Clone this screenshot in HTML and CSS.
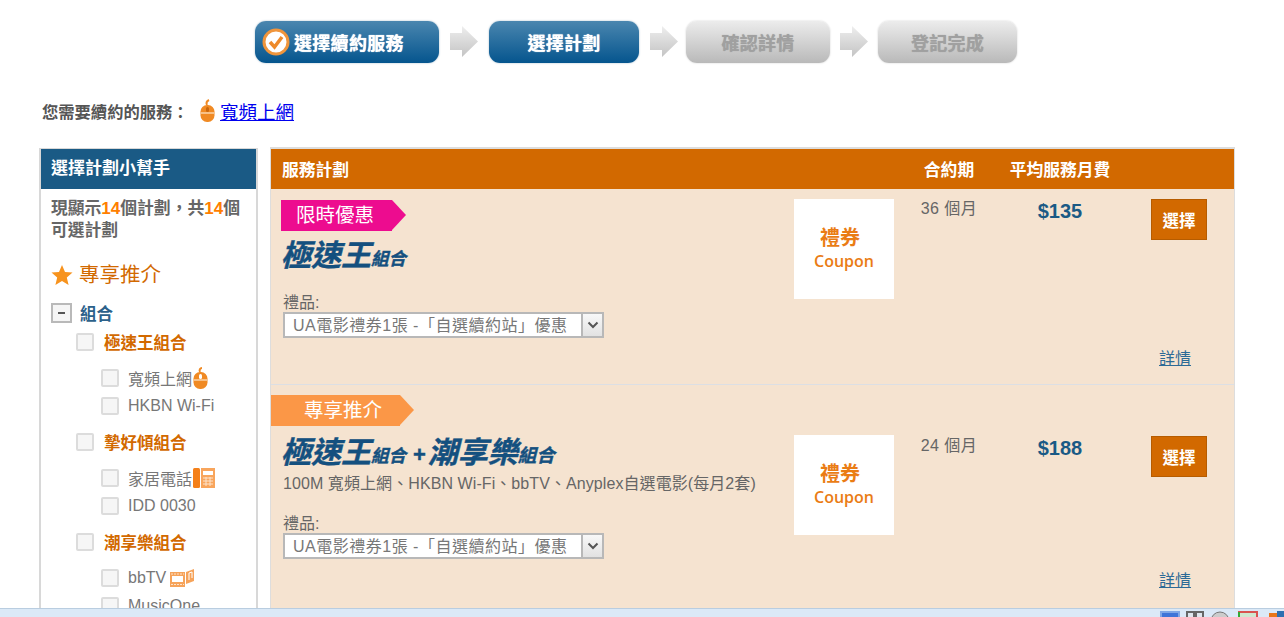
FILE: index.html
```html
<!DOCTYPE html>
<html lang="zh-Hant">
<head>
    <meta charset="UTF-8">
    <title>選擇計劃</title>
    <link rel="stylesheet" href="styles.css">
</head>
<body>
    <div class="steps">
        <div class="step step-done step-1">
            <svg class="step-check" width="28" height="28" viewBox="0 0 28 28"><circle cx="14" cy="14" r="12" fill="#fff" stroke="#f0953c" stroke-width="3"/><path d="M8 14l4.500 5L20 9" fill="none" stroke="#ee8a2a" stroke-width="3.500"/></svg>
            選擇續約服務
        </div>
        <svg class="arrow" width="28" height="31" viewBox="0 0 28 31"><defs><linearGradient id="arrow-fill" x1="0" y1="0" x2="0" y2="1"><stop offset="0" stop-color="#eeeeee"/><stop offset="1" stop-color="#c4c4c4"/></linearGradient></defs><path d="M0 7h12V0l16 15.500L12 31v-7H0z" fill="url(#arrow-fill)"/></svg>
        <div class="step step-done step-2">選擇計劃</div>
        <svg class="arrow" width="28" height="31" viewBox="0 0 28 31"><path d="M0 7h12V0l16 15.500L12 31v-7H0z" fill="url(#arrow-fill)"/></svg>
        <div class="step step-off step-3">確認詳情</div>
        <svg class="arrow" width="28" height="31" viewBox="0 0 28 31"><path d="M0 7h12V0l16 15.500L12 31v-7H0z" fill="url(#arrow-fill)"/></svg>
        <div class="step step-off step-4">登記完成</div>
    </div>

    <div class="service-line">
        <span class="service-label">您需要續約的服務：</span>
        <svg width="15" height="24" viewBox="0 0 15 24"><path d="M7 6C6 4 7 2 9 1" fill="none" stroke="#f08a24" stroke-width="2"/><rect x="0.500" y="6" width="14" height="17" rx="6.500" fill="#f08a24"/><path d="M1 14h13" stroke="#fbd3a8" stroke-width="1.500"/><rect x="6" y="8" width="3" height="5" rx="1.500" fill="#c9660c"/></svg>
        <a href="#" class="service-link">寬頻上網</a>
    </div>

    <div class="page">
        <aside class="helper">
            <h3 class="helper-title">選擇計劃小幫手</h3>
            <p class="helper-count">現顯示<em>14</em>個計劃，共<em>14</em>個可選計劃</p>
            <div class="helper-star">
                <svg width="22" height="22" viewBox="0 0 22 22"><path d="M11 1l3 7 7.500.6-5.700 5 1.800 7.400L11 17l-6.600 4 1.800-7.400-5.700-5L8 8z" fill="#f7931e"/></svg>
                專享推介
            </div>
            <div class="tree-head"><span class="minus"></span>組合</div>

            <label class="tree-group"><input type="checkbox">極速王組合</label>
            <div class="tree-items">
                <label class="tree-item"><input type="checkbox">寬頻上網
                    <svg class="icon-after" width="15" height="22" viewBox="0 0 15 22"><path d="M7 5C6 3 7 1 9 1" fill="none" stroke="#f08a24" stroke-width="2"/><rect x="0.500" y="5" width="14" height="17" rx="6.500" fill="#f08a24"/><path d="M1 13h13" stroke="#fbd3a8" stroke-width="1.500"/><rect x="6" y="7" width="3" height="5" rx="1.500" fill="#fff"/></svg>
                </label>
                <label class="tree-item"><input type="checkbox">HKBN Wi-Fi</label>
            </div>

            <label class="tree-group"><input type="checkbox">摯好傾組合</label>
            <div class="tree-items">
                <label class="tree-item"><input type="checkbox">家居電話
                    <svg class="icon-after" width="22" height="20" viewBox="0 0 22 20"><rect x="0" y="0" width="7" height="20" rx="1.500" fill="#f4801a"/><rect x="8" y="0" width="14" height="20" fill="#f8a55c"/><rect x="10" y="3" width="10" height="4" fill="#fff"/><path d="M10 10h10M10 13h10M10 16h10M13 9v9M17 9v9" stroke="#fde3cb"/></svg>
                </label>
                <label class="tree-item"><input type="checkbox">IDD 0030</label>
            </div>

            <label class="tree-group"><input type="checkbox">潮享樂組合</label>
            <div class="tree-items">
                <label class="tree-item"><input type="checkbox">bbTV
                    <svg class="icon-tv" width="24" height="18" viewBox="0 0 24 18"><rect x="0" y="3" width="15" height="15" fill="#f6a35a"/><rect x="2" y="7" width="11" height="6" fill="#fff"/><path d="M1 5h13M1 15.500h13" stroke="#fde3cb" stroke-dasharray="2 1"/><path d="M16 3l8-3v12l-8 3z" fill="#f6a35a"/><path d="M19 4v7M19 4l3-1v6" fill="none" stroke="#fff"/></svg>
                </label>
                <label class="tree-item"><input type="checkbox">MusicOne</label>
            </div>
        </aside>

        <main class="plans">
            <div class="plans-head plan-grid">
                <div class="head-name">服務計劃</div>
                <div></div>
                <div class="center">合約期</div>
                <div class="center">平均服務月費</div>
                <div></div>
            </div>

            <section class="plan plan-grid plan-first">
                <div class="plan-info">
                    <div class="ribbon ribbon-pink">限時優惠</div>
                    <div class="plan-logo"><span class="logo-big">極速王</span><span class="logo-small">組合</span></div>
                    <div class="gift gift-first">
                        <div class="gift-label">禮品:</div>
                        <div class="gift-box">
                            <select class="gift-select"><option>UA電影禮券1張 -「自選續約站」優惠</option></select>
                            <span class="gift-btn"><svg width="12" height="8" viewBox="0 0 12 8"><path d="M1.500 1.500L6 6l4.500-4.500" fill="none" stroke="#555" stroke-width="2"/></svg></span>
                        </div>
                    </div>
                </div>
                <div class="coupon"><span class="coupon-zh">禮券</span><span class="coupon-en">Coupon</span></div>
                <div class="term">36 個月</div>
                <div class="price">$135</div>
                <div class="action">
                    <button class="select-btn">選擇</button>
                    <a href="#" class="details">詳情</a>
                </div>
            </section>

            <section class="plan plan-grid plan-second">
                <div class="plan-info">
                    <div class="ribbon ribbon-orange">專享推介</div>
                    <div class="plan-logo"><span class="logo-big">極速王</span><span class="logo-small">組合</span><span class="logo-plus">+</span><span class="logo-big">潮享樂</span><span class="logo-small">組合</span></div>
                    <div class="plan-desc">100M 寬頻上網、HKBN Wi-Fi、bbTV、Anyplex自選電影(每月2套)</div>
                    <div class="gift">
                        <div class="gift-label">禮品:</div>
                        <div class="gift-box">
                            <select class="gift-select"><option>UA電影禮券1張 -「自選續約站」優惠</option></select>
                            <span class="gift-btn"><svg width="12" height="8" viewBox="0 0 12 8"><path d="M1.500 1.500L6 6l4.500-4.500" fill="none" stroke="#555" stroke-width="2"/></svg></span>
                        </div>
                    </div>
                </div>
                <div class="coupon"><span class="coupon-zh">禮券</span><span class="coupon-en">Coupon</span></div>
                <div class="term">24 個月</div>
                <div class="price">$188</div>
                <div class="action">
                    <button class="select-btn">選擇</button>
                    <a href="#" class="details">詳情</a>
                </div>
            </section>
        </main>
    </div>

    <div class="tray">
        <svg width="20" height="6" viewBox="0 0 20 6"><rect x="1" y="1" width="18" height="9" fill="#3f74d8" stroke="#7fa6e6" stroke-width="2"/></svg>
        <svg width="18" height="6" viewBox="0 0 18 6"><path d="M1 1h7v7H1zM10 1h7v7h-7z" fill="#dfe6ee" stroke="#666" stroke-width="2"/></svg>
        <svg class="tray-wide" width="20" height="6" viewBox="0 0 20 6"><circle cx="10" cy="10" r="9" fill="#ccc" stroke="#777"/></svg>
        <svg class="tray-wider" width="20" height="6" viewBox="0 0 20 6"><rect x="1" y="1" width="18" height="9" fill="#cfe8cf" stroke="#d9534f" stroke-width="2"/><path d="M1 6V1" stroke="#3a3" stroke-width="2"/></svg>
        <svg width="15" height="6" viewBox="0 0 15 6"><rect x="0" y="2" width="8" height="4" fill="#e8761a"/><rect x="8" y="0" width="7" height="6" fill="#2d6fb0"/></svg>
    </div>
</body>
</html>
```

FILE: styles.css
```css
html, body {
    height: 617px;
    overflow: hidden;
}

body {
    margin: 0;
    background-color: #ffffff;
    color: #666666;
    font-family: "Liberation Sans", Arial, "Noto Sans CJK TC", sans-serif;
    font-size: 16px;
}

/* top wizard */
.steps {
    display: flex;
    align-items: center;
    padding: 20px 0 0 255px;
    height: 43px;
}

.step {
    display: flex;
    align-items: center;
    justify-content: center;
    box-sizing: border-box;
    height: 42px;
    border-radius: 11px;
    font-size: 18px;
    font-weight: bold;
    letter-spacing: 0.3px;
}

.step-done {
    background: linear-gradient(#4a86af, #05558e);
    color: #ffffff;
    box-shadow: 0 0 2px #9db5c6;
    text-shadow: 0 0 1px #ffffff;
}

.step-off {
    background: linear-gradient(#ececec, #b9b9b9);
    color: #a0a0a0;
    box-shadow: 0 0 2px #cccccc;
    text-shadow: 0 0 1px #a0a0a0;
}

.step-1 {
    justify-content: flex-start;
    width: 184px;
    padding-left: 7px;
    gap: 4px;
    margin-right: 11px;
}

.step-2 {
    width: 150px;
    margin: 0 11px;
}

.step-3 {
    width: 144px;
    margin: 0 10px 0 8px;
}

.step-4 {
    width: 139px;
    margin-left: 10px;
}

.arrow {
    flex: none;
}

/* service line */
.service-line {
    display: flex;
    align-items: center;
    height: 30px;
    margin: 33px 0 0 42px;
}

.service-label {
    width: 158px;
    font-weight: bold;
    font-size: 16.300px;
    color: #555555;
}

.service-link {
    margin-left: 5px;
    font-size: 18.500px;
    color: #0000ee;
}

/* two columns */
.page {
    display: flex;
    align-items: flex-start;
    gap: 12px;
    margin: 22px 0 0 39px;
}

.helper {
    box-sizing: border-box;
    width: 219px;
    height: 520px;
    border: 2px solid #d8d8d8;
    border-bottom: 0;
    border-top-width: 1px;
}

.helper-title {
    margin: 0;
    height: 40px;
    padding-left: 10px;
    background-color: #1a5a85;
    color: #ffffff;
    font-size: 17px;
    line-height: 40px;
}

.helper-count {
    margin: 9px 4px 0 10px;
    font-size: 16.800px;
    font-weight: bold;
    line-height: 22px;
    color: #666666;
}

.helper-count em {
    font-style: normal;
    font-size: 17px;
    color: #ff7f00;
}

.helper-star {
    display: flex;
    align-items: center;
    gap: 6px;
    margin: 18px 0 0 10px;
    font-size: 20.500px;
    line-height: 30px;
    color: #d26900;
}

.tree-head {
    display: flex;
    align-items: center;
    gap: 8px;
    margin: 11px 0 3px 10px;
    height: 24px;
    font-size: 16.500px;
    font-weight: bold;
    color: #2c618a;
}

.minus {
    box-sizing: border-box;
    position: relative;
    width: 21px;
    height: 20px;
    border: 2px solid #b9b9b9;
    background-color: #f5f5f5;
}

.minus::after {
    content: "";
    position: absolute;
    left: 5px;
    top: 7px;
    width: 7px;
    height: 2px;
    background-color: #555555;
}

input[type="checkbox"] {
    appearance: none;
    flex: none;
    box-sizing: border-box;
    width: 18px;
    height: 18px;
    margin: 0;
    border: 2px solid #dcdcdc;
    border-radius: 2px;
    background-color: #f6f6f6;
}

.tree-group {
    display: flex;
    align-items: center;
    gap: 10px;
    height: 28px;
    margin-left: 35px;
    font-size: 16.500px;
    font-weight: bold;
    color: #d26900;
}

.tree-items {
    margin: 8px 0;
}

.tree-item {
    display: flex;
    align-items: center;
    gap: 9px;
    height: 28px;
    margin-left: 60px;
    font-size: 16px;
    color: #777777;
}

.icon-after {
    margin-left: -8px;
}

.icon-tv {
    margin-left: -5px;
}

/* plans table */
.plans {
    box-sizing: border-box;
    width: 965px;
    border: 1px solid #dddddd;
    border-top: 2px solid #dddddd;
    margin-top: -1px;
}

.plan-grid {
    display: grid;
    grid-template-columns: 523px 100px 110px 112px 118px;
}

.plans-head {
    height: 40px;
    align-items: center;
    background-color: #d26900;
    color: #ffffff;
    font-size: 16.800px;
    font-weight: bold;
}

.head-name {
    padding-left: 11px;
}

.center {
    text-align: center;
}

.plan {
    background-color: #f5e3d0;
}

.plan-first {
    height: 195px;
    border-bottom: 1px solid #dcdfe4;
}

.plan-second {
    height: 240px;
}

.plan-info {
    padding-left: 12px;
}

.ribbon {
    position: relative;
    box-sizing: border-box;
    height: 31px;
    color: #ffffff;
    font-size: 19.500px;
    line-height: 30px;
}

.ribbon::after {
    content: "";
    position: absolute;
    top: 0;
    left: 100%;
    border-style: solid;
    border-width: 15.500px 0 15.500px 14px;
    border-color: transparent;
}

.ribbon-pink {
    width: 111px;
    margin: 11px 0 0 -2px;
    padding-left: 15px;
    background-color: #ed0c8f;
}

.ribbon-pink::after {
    border-left-color: #ed0c8f;
}

.ribbon-orange {
    width: 129px;
    margin: 10px 0 0 -12px;
    padding-left: 33px;
    background-color: #fb9747;
}

.ribbon-orange::after {
    border-left-color: #fb9747;
}

.plan-logo {
    display: flex;
    align-items: flex-end;
    height: 32px;
    margin: 9px 0 0 -2px;
    color: #14507f;
    font-weight: bold;
    font-style: italic;
    -webkit-text-stroke: 0.4px #14507f;
}

.plan-second .plan-logo {
    margin-top: 11px;
}

.logo-big {
    font-size: 30px;
    line-height: 32px;
}

.logo-small {
    font-size: 17.500px;
    line-height: 26px;
}

.logo-plus {
    margin: 0 2px 0 7px;
    font-size: 22px;
    line-height: 28px;
    font-style: normal;
}

.plan-second .logo-small:last-child {
    font-size: 18.500px;
}

.plan-desc {
    margin-top: 5px;
    font-size: 16px;
    letter-spacing: 0.08px;
    line-height: 20px;
    color: #666666;
}

.gift {
    margin-top: 20px;
}

.gift-first {
    margin-top: 21px;
}

.gift-label {
    font-size: 16px;
    line-height: 19px;
    color: #666666;
}

.gift-box {
    display: flex;
    box-sizing: border-box;
    width: 321px;
    height: 26px;
    border: 2px solid #b8b8b8;
    background-color: #ffffff;
}

.gift-select {
    appearance: none;
    flex: 1;
    min-width: 0;
    padding: 0 0 0 8px;
    border: 0;
    background: transparent;
    color: #777777;
    font-family: "Liberation Sans", Arial, "Noto Sans CJK TC", sans-serif;
    font-size: 16px;
    letter-spacing: 0.5px;
}

.gift-btn {
    display: flex;
    align-items: center;
    justify-content: center;
    width: 19px;
    border-left: 2px solid #b8b8b8;
    background: linear-gradient(#f8f8f8, #e2e2e2);
}

.coupon {
    display: flex;
    flex-direction: column;
    align-items: center;
    justify-content: center;
    box-sizing: border-box;
    width: 100px;
    height: 100px;
    margin-top: 10px;
    padding-bottom: 2px;
    background-color: #ffffff;
    color: #ea7c14;
}

.coupon-zh {
    margin-right: 8px;
    font-size: 20px;
    font-weight: bold;
    line-height: 26px;
}

.coupon-en {
    font-family: "Open Sans", sans-serif;
    font-size: 16px;
    font-weight: 600;
    line-height: 20px;
}

.term {
    margin-top: 9px;
    text-align: center;
    letter-spacing: 0.5px;
    line-height: 22px;
}

.price {
    margin-top: 10px;
    text-align: center;
    color: #1a5a85;
    font-size: 20px;
    font-weight: bold;
    line-height: 24px;
}

.action {
    display: flex;
    flex-direction: column;
    align-items: flex-start;
    padding: 10px 0 0 35px;
}

.select-btn {
    box-sizing: border-box;
    width: 56px;
    height: 41px;
    padding: 0;
    border: 1px solid #b65c00;
    background-color: #d26900;
    color: #ffffff;
    font-family: inherit;
    font-size: 16.500px;
    font-weight: bold;
}

.details {
    margin: 105px 0 0 8px;
    color: #2c6a96;
    font-size: 16px;
}

.plan-second .coupon {
    margin-top: 50px;
}

.plan-second .term {
    margin-top: 50px;
}

.plan-second .price {
    margin-top: 51px;
}

.plan-second .action {
    padding-top: 51px;
}

.plan-second .details {
    margin-top: 90px;
}

/* browser bar at the bottom */
.tray {
    position: fixed;
    left: 0;
    right: 0;
    bottom: 0;
    display: flex;
    justify-content: flex-end;
    align-items: flex-end;
    gap: 6px;
    box-sizing: border-box;
    height: 9px;
    border-top: 1px solid #b9cde0;
    background-color: #dbe9f7;
}

.tray-wide {
    margin-right: 2px;
}

.tray-wider {
    margin-right: 5px;
}
```
